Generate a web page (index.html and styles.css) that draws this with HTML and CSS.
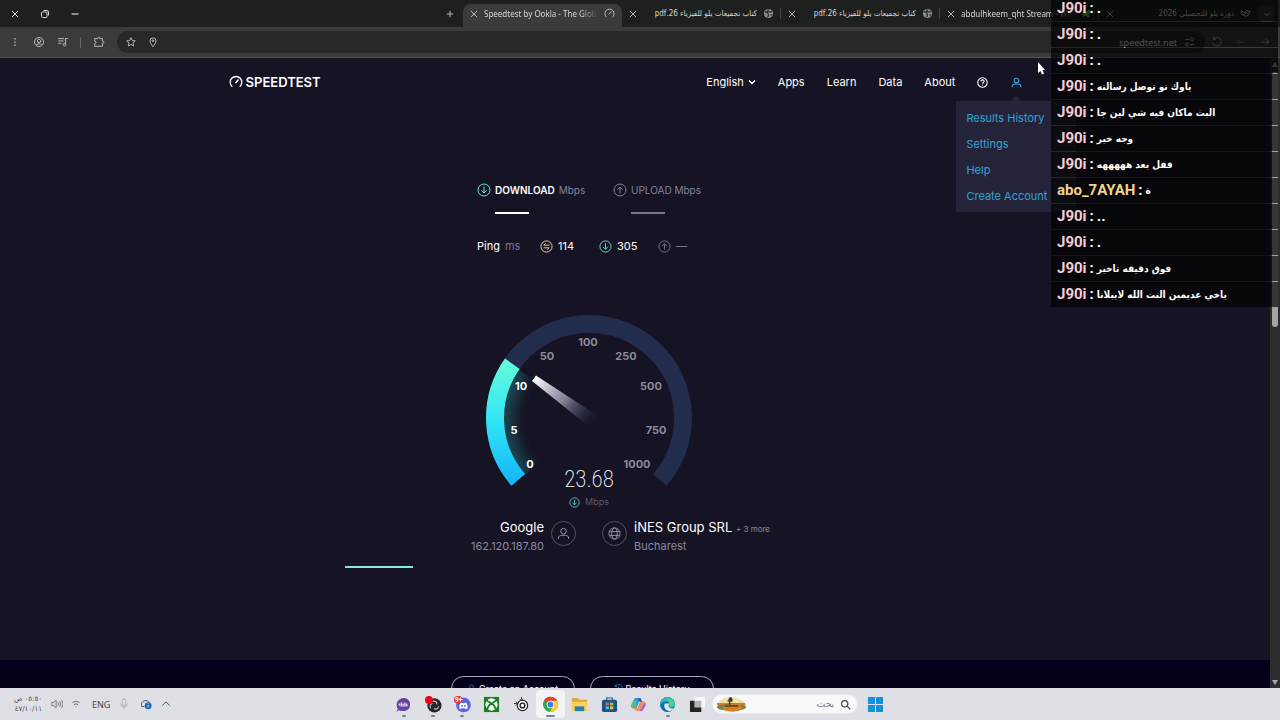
FILE: index.html
```html
<!DOCTYPE html>
<html lang="en">
<head>
<meta charset="utf-8">
<title>Speedtest by Ookla - The Global Broadband Speed Test</title>
<link rel="stylesheet" href="styles.css">
</head>
<body>
<svg class="defs" aria-hidden="true">
  <symbol id="close" viewBox="0 0 10 10"><path d="M1 1l8 8M9 1l-8 8"/></symbol>
  <symbol id="globe-solid" viewBox="0 0 12 12"><circle cx="6" cy="6" r="5" fill="#8b8c8b" stroke="none"/><path d="M2 4l3 1 1 3-1 2M6 1.500l-1 2 3 1 2-1M8 7l2 1" stroke="#2b2c2b" stroke-width="1.300"/></symbol>
  <symbol id="down" viewBox="0 0 14 14"><circle cx="7" cy="7" r="6"/><path d="M7 3.500v6.500M4.300 7.300L7 10l2.700-2.700"/></symbol>
  <symbol id="up" viewBox="0 0 14 14"><circle cx="7" cy="7" r="6"/><path d="M7 10.500V4M4.300 6.700L7 4l2.700 2.700"/></symbol>
  <symbol id="idle" viewBox="0 0 14 14"><circle cx="7" cy="7" r="6"/><path d="M10 5.600H4.200l2-2M4 8.400h5.800l-2 2"/></symbol>
  <symbol id="person" viewBox="0 0 14 14"><circle cx="7" cy="4.500" r="3"/><path d="M1.500 13v-1c0-2 1.500-3 3.500-3h4c2 0 3.500 1 3.500 3v1"/></symbol>
  <symbol id="gauge" viewBox="0 0 14 14"><path d="M3.300 11.700a5.800 5.800 0 1 1 7.400 0M6.500 8l3-3.500"/></symbol>
</svg>

<header class="tabstrip">
  <div class="window-controls">
    <button aria-label="Close"><svg viewBox="0 0 10 10"><path d="M2 2l6 6M8 2l-6 6"/></svg></button>
    <button aria-label="Restore"><svg viewBox="0 0 10 10"><rect x="1.500" y="3" width="5.500" height="5.500" rx="1"/><path d="M3.500 1.500h3.500q1.500 0 1.500 1.500v3.500"/></svg></button>
    <button aria-label="Minimize"><svg viewBox="0 0 10 10"><path d="M1.500 5h7" stroke="#909190" stroke-width="2"/></svg></button>
  </div>
  <button class="new-tab" aria-label="New tab"><svg viewBox="0 0 10 10"><path d="M5 1v8M1 5h8"/></svg></button>
  <div class="tabs">
    <div class="tab active"><button aria-label="Close tab"><svg><use href="#close"/></svg></button><span class="title">Speedtest by Ookla - The Globa</span><svg class="favicon"><use href="#gauge"/></svg></div>
    <div class="tab"><button aria-label="Close tab"><svg><use href="#close"/></svg></button><span class="title ar" dir="rtl">كتاب تجميعات يلو للفيزياء 26.pdf</span><svg class="favicon"><use href="#globe-solid"/></svg></div>
    <div class="tab"><button aria-label="Close tab"><svg><use href="#close"/></svg></button><span class="title ar" dir="rtl">كتاب تجميعات يلو للفيزياء 26.pdf</span><svg class="favicon"><use href="#globe-solid"/></svg></div>
    <div class="tab"><button aria-label="Close tab"><svg><use href="#close"/></svg></button><span class="title">abdulhkeem_qht Stream - Wat</span><svg class="favicon" viewBox="0 0 12 12"><path d="M2 3l4 1 3-2 1 3-2 2 2 3H7L5 8 2 10z" fill="#45e51d" stroke="none"/></svg></div>
    <div class="tab last"><button aria-label="Close tab"><svg><use href="#close"/></svg></button><span class="title ar" dir="rtl">دورة يلو للتحصيلي 2026</span><svg class="favicon" viewBox="0 0 12 12"><path d="M1 3l4 2 2-2 4 1-2 4-3 1-4-2zM4 7l3-2 2 2"/></svg></div>
  </div>
  <button class="tab-search" aria-label="Search tabs"><svg viewBox="0 0 10 10"><path d="M2.500 4L5 6.500 7.500 4"/></svg></button>
</header>

<div class="toolbar">
  <button aria-label="Menu"><svg viewBox="0 0 14 14"><path d="M7 2.500v1.500M7 6.300v1.500M7 10v1.500" stroke-width="1.600"/></svg></button>
  <button aria-label="Profile"><svg viewBox="0 0 14 14"><circle cx="7" cy="7" r="5.300"/><circle cx="7" cy="5.800" r="2"/><path d="M3.700 10.500c1.800-1.800 4.800-1.800 6.600 0"/></svg></button>
  <button aria-label="Media"><svg viewBox="0 0 14 14"><path d="M1.500 3h7M1.500 5.800h6M1.500 8.500h3.500M10 10V3h2.500"/><circle cx="8.600" cy="10" r="1.500"/></svg></button>
  <span class="divider"></span>
  <button class="ext" aria-label="Extensions"><svg viewBox="0 0 14 14"><path d="M2 3h3.500q0-1.700 1.200-1.700T8 3h3v3.200q1.700 0 1.700 1.200T11 8.600V12H2V9q1.500-.3 1.500-1.500T2 6z"/></svg></button>
  <div class="omnibox">
    <button aria-label="Bookmark"><svg viewBox="0 0 14 14"><path d="M7 2l1.500 3.300 3.500.4-2.600 2.400.7 3.500L7 9.900l-3.100 1.700.7-3.500L2 5.700l3.500-.4z"/></svg></button>
    <button aria-label="Location"><svg viewBox="0 0 14 14"><path d="M7 12.500C4.800 9.500 3.500 7.800 3.500 5.700a3.500 3.500 0 0 1 7 0c0 2.100-1.300 3.800-3.500 6.800z"/><circle cx="7" cy="5.500" r="1"/></svg></button>
    <input type="text" aria-label="Address" value="speedtest.net">
    <button aria-label="Site settings"><svg viewBox="0 0 14 14"><path d="M1.500 4h5M7 10h5.500"/><circle cx="9.500" cy="4" r="1.700"/><circle cx="3.500" cy="10" r="1.700"/></svg></button>
  </div>
  <button class="nav-button" aria-label="Reload"><svg viewBox="0 0 14 14"><path d="M3 3.500A5 5 0 1 1 2.200 8M3 1v3h3"/></svg></button>
  <button class="nav-button dim" aria-label="Forward"><svg viewBox="0 0 14 14"><path d="M11.500 7h-9M6 3.500L2.500 7 6 10.500"/></svg></button>
  <button class="nav-button" aria-label="Back"><svg viewBox="0 0 14 14"><path d="M2.500 7h9M8 3.500L11.500 7 8 10.500"/></svg></button>
</div>

<div class="viewport">
  <div class="page">
    <header class="site-header">
      <a class="logo" href="#"><svg><use href="#gauge"/></svg>SPEEDTEST</a>
      <nav>
        <button>English <svg class="caret" viewBox="0 0 8 8"><path d="M1 2.500l3 3 3-3"/></svg></button>
        <a href="#">Apps</a><a href="#">Learn</a><a href="#">Data</a><a href="#">About</a>
        <a href="#" class="nav-icon" aria-label="Help"><svg viewBox="0 0 14 14"><circle cx="7" cy="7" r="6"/><path d="M5 5.700c0-2.800 4.200-2.500 4.200-.2C9.200 7 7 7 7 8.600M7 9.600v1.200"/></svg></a>
        <div class="account">
          <button class="nav-icon user" aria-label="Account"><svg><use href="#person"/></svg></button>
          <div class="account-menu"><a href="#">Results History</a><a href="#">Settings</a><a href="#">Help</a><a href="#">Create Account</a></div>
        </div>
      </nav>
    </header>

    <main class="stage">
      <div class="speeds">
        <section class="speed down"><h2><svg><use href="#down"/></svg><b>DOWNLOAD</b> Mbps</h2><span class="dash"></span></section>
        <section class="speed up"><h2><svg><use href="#up"/></svg>UPLOAD Mbps</h2><span class="dash"></span></section>
      </div>
      <div class="pings">
        <span class="ping-label">Ping <em>ms</em></span>
        <span class="idle"><svg><use href="#idle"/></svg>114</span>
        <span class="down"><svg><use href="#down"/></svg>305</span>
        <span class="up"><svg><use href="#up"/></svg>—</span>
      </div>
      <svg class="dial" viewBox="0 0 220 182" role="img" aria-label="23.68 Mbps">
        <defs>
          <linearGradient id="arc" x1="0" y1="0" x2="0" y2="1"><stop offset="0" stop-color="#62fbdc"/><stop offset=".5" stop-color="#31e4f5"/><stop offset="1" stop-color="#16b9f8"/></linearGradient>
          <linearGradient id="needle" gradientUnits="userSpaceOnUse" x1="55" y1="68" x2="117" y2="112"><stop offset="0" stop-color="#fff"/><stop offset=".5" stop-color="#9492a8" stop-opacity=".85"/><stop offset="1" stop-color="#223050" stop-opacity="0"/></linearGradient>
          <filter id="soft" x="-50%" y="-50%" width="200%" height="200%"><feGaussianBlur stdDeviation="8"/></filter>
          <clipPath id="inside"><path d="M110 108L39 59A85 85 0 0 0 46 165z"/></clipPath>
        </defs>
        <g clip-path="url(#inside)"><path d="M45 170A84 84 0 0 1 40 56" fill="none" stroke="#32d9d2" stroke-width="26" opacity=".3" filter="url(#soft)"/></g>
        <path class="track" d="M39.300 169.900A94 94 0 1 1 180.700 169.900"/>
        <path class="fill" d="M39.300 169.900A94 94 0 0 1 33.300 53.700"/>
        <path d="M57 65.500L53 71l55 44q8 0 11-9z" fill="url(#needle)" stroke="none"/>
        <g class="ticks">
          <g class="passed"><text x="51" y="158">0</text><text x="35" y="124">5</text><text x="42" y="80">10</text></g>
          <text x="68" y="50">50</text><text x="109" y="36">100</text><text x="147" y="50">250</text><text x="172" y="80">500</text><text x="177" y="124">750</text><text x="158" y="158">1000</text>
        </g>
        <text class="reading" x="110" y="177">23.68</text>
      </svg>
      <div class="unit"><svg><use href="#down"/></svg>Mbps</div>
      <div class="endpoints">
        <div class="endpoint client"><div><strong>Google</strong><span>162.120.187.80</span></div><i class="badge"><svg><use href="#person"/></svg></i></div>
        <div class="endpoint"><i class="badge"><svg viewBox="0 0 14 14"><circle cx="7" cy="7" r="6"/><ellipse cx="7" cy="7" rx="3" ry="6"/><path d="M1.500 5h11M1.500 9h11"/></svg></i><div><strong>iNES Group SRL <small>+ 3 more</small></strong><span>Bucharest</span></div></div>
      </div>
      <div class="progress"><div style="width:14%"></div></div>
    </main>

    <footer class="site-footer">
      <a href="#"><svg><use href="#person"/></svg>Create an Account</a>
      <a href="#"><svg viewBox="0 0 14 14"><path d="M2 3.500A6 6 0 1 1 1.500 9M2 1v3h3M7 4v4l3 1"/></svg>Results History</a>
    </footer>
  </div>
  <div class="scrollbar"><span class="arrow-up"></span><span class="thumb"></span><span class="arrow-down"></span></div>
</div>

<footer class="taskbar">
  <div class="tray">
    <time><span dir="rtl">٠٥:٥٠ ص</span><span dir="ltr"><bdo dir="ltr">٤٧/١٠/١١</bdo></span></time>
    <svg class="volume" viewBox="0 0 14 14"><path d="M1 5h2l3-2.500v9L3 9H1zM8 5q1.500 2 0 4M10 3.500q3 3.500 0 7M12 2q4 5 0 10"/></svg>
    <svg class="wifi" viewBox="0 0 14 14"><path d="M2 5q5-4 10 0M4 8q3-2.500 6 0M6.500 11h1"/></svg>
    <span class="lang">ENG</span>
    <svg class="mic" viewBox="0 0 14 14"><rect x="5" y="1" width="4" height="7.500" rx="2"/><path d="M3 6.500q0 4 4 4t4-4M7 10.500V13"/></svg>
    <svg class="sync" viewBox="0 0 14 14"><path d="M2 10q-1.500-6 4-7 3-.5 5 2M2 10h3"/><circle cx="9.500" cy="9" r="4" fill="#1769b5" stroke="none"/><path d="M9.500 8v3M9.500 6v1" stroke="#fff"/></svg>
    <svg class="expand" viewBox="0 0 14 14"><path d="M2.500 9L7 4.500 11.500 9"/></svg>
  </div>
  <div class="dock">
    <div class="apps">
      <button class="running" aria-label="Chat"><svg viewBox="0 0 18 18"><path d="M3 14q-2-3-1-7 2-5 8-5 6 1 6 7 0 6-6 7-4 0-6-1l-3 2z" fill="#68449f"/><path d="M4.500 10V8m2 3V7m2 4V8m2 3V7m2 4V8" stroke="#fff" stroke-width="1.200"/></svg></button>
      <button class="running" aria-label="OBS"><svg viewBox="0 0 18 18"><circle cx="10" cy="10" r="7.500" fill="#272528"/><path d="M8 5.500q5-.5 4.500 3.500M14.500 11q-2 4.500-5 2M6 13q-2-4 2-5" stroke="#ccc" stroke-width="1.100" fill="none"/><circle cx="4.200" cy="4.200" r="4.200" fill="#ed0618"/></svg></button>
      <button class="running" aria-label="Discord"><svg viewBox="0 0 18 18"><circle cx="10" cy="9.500" r="7.800" fill="#5965e8"/><path d="M5.500 13q0-5 2-6l2 .7h1l2-.7q2 1 2 6l-2 1-1-1H8l-1 1z" fill="#fff"/><circle cx="8.500" cy="10.500" r="1" fill="#5965e8"/><circle cx="11.500" cy="10.500" r="1" fill="#5965e8"/><rect x="0" y="0" width="9" height="8" rx="4" fill="#d93543"/><text x="1" y="6.500" class="count">9+</text></svg></button>
      <button aria-label="Xbox"><svg viewBox="0 0 18 18"><rect x="1" y="1" width="16" height="16" fill="#178020"/><circle cx="9" cy="9" r="6.500" fill="#fff"/><path d="M3.500 4.500Q8 7 9 8.500 10 7 14.500 4.500M9 7.500Q5.500 10 4.300 14M9 7.500Q12.500 10 13.700 14" fill="none" stroke="#178020" stroke-width="2"/></svg></button>
      <button aria-label="Settings"><svg viewBox="0 0 18 18"><circle cx="10" cy="10" r="5.500" fill="#f4f4f4" stroke="#222" stroke-width="1.200"/><circle cx="10" cy="10" r="2.500" fill="#fff" stroke="#222" stroke-width="1.500"/><path d="M1 8h4M3 6l2 2-2 2M9 1v3M7 3l2 2 2-2" stroke="#333" fill="none"/></svg></button>
      <button class="running current" aria-label="Chrome"><svg viewBox="0 0 18 18"><circle cx="9" cy="9" r="8" fill="#34a853"/><path d="M9 9L2 5A8 8 0 0 1 16 5z" fill="#df3f35"/><path d="M9 5h7a8 8 0 0 1-7.500 12L12 10z" fill="#f7cb34"/><circle cx="9" cy="9" r="4" fill="#fff"/><circle cx="9" cy="9" r="3.100" fill="#3c80e8"/></svg></button>
      <button aria-label="Files"><svg viewBox="0 0 18 18"><path d="M1 2h6l2 2h8v12H1z" fill="#e3a52b"/><path d="M1 6h16v10H1z" fill="#f9d15e"/><path d="M4 11h10v5H4z" fill="#237eb6"/></svg></button>
      <button aria-label="Store"><svg viewBox="0 0 18 18"><path d="M6 5V2h6v3" stroke="#2a87c7" fill="none" stroke-width="1.500"/><rect x="1" y="4" width="16" height="13" rx="2" fill="#205284"/><path d="M5 7h3.500v3H5z" fill="#ee6548"/><path d="M9.500 7H13v3H9.500z" fill="#95c943"/><path d="M5 11h3.500v3H5z" fill="#4bb9ec"/><path d="M9.500 11H13v3H9.500z" fill="#f3c546"/></svg></button>
      <button aria-label="Copilot"><svg viewBox="0 0 18 18"><path d="M5 2h6L7 13H3Q0 12 2 8z" fill="#269de0"/><path d="M2 8l4-5 1 8-4 2Q0 12 2 8" fill="#57bf70"/><path d="M11 2l2 4h2q3 2 1 5l-3 5H7l4-10z" fill="#a35dd9"/><path d="M3 13h5l3-7h5l-3 6-3 4H7z" fill="#ef8d69"/><path d="M8 2h3l2 4h-3z" fill="#285ac5"/></svg></button>
      <button class="running" aria-label="Edge"><svg viewBox="0 0 18 18"><circle cx="9" cy="9" r="8" fill="#1768b6"/><path d="M1 8Q3 1 9 1q8 1 8 8-1 4-5 3-2-1-1-3-1-5-6-3-3 1-4 4" fill="#30bdba"/><path d="M6 8q-2 6 4 8 4 0 6-3-5 1-6-3l1-2z" fill="#d9eef5"/><path d="M11 3q5 1 5 6-1 2-4 2l-1-2q2-4-3-4" fill="#5dcf75"/></svg></button>
      <button aria-label="Task view"><svg viewBox="0 0 18 18"><path d="M6 1h11v11H6z" fill="#f6f6f6"/><path d="M1 5h5v7h7v5H1z" fill="#242425"/><path d="M6 5h7v7H6z" fill="#b4b5b7"/></svg></button>
    </div>
    <label class="search" dir="ltr"><svg class="art" viewBox="0 0 32 16"><path d="M1 9Q5 1 15 1t16 7l-4 4H5z" fill="#f3dfa2"/><ellipse cx="16" cy="11" rx="15" ry="4" fill="#718049"/><ellipse cx="17" cy="12" rx="10" ry="4" fill="#d87d27"/><path d="M9 10h14M14 9V5M12 5h5" stroke="#4d3826" stroke-width="1.500"/><circle cx="15" cy="3" r="2" fill="#3e3528"/><path d="M1 8h8M22 8h8" stroke="#c28229" stroke-width="2"/></svg><input type="search" dir="rtl" placeholder="بحث" aria-label="بحث"><svg class="lens" viewBox="0 0 14 14"><circle cx="6" cy="6" r="4"/><path d="M9 9l4 4"/></svg></label>
    <button class="start" aria-label="Start"><svg viewBox="0 0 18 18"><path d="M1 1h7.500v7.500H1zM9.500 1H17v7.500H9.500zM1 9.500h7.500V17H1zM9.500 9.500H17V17H9.500z" fill="#1693dd"/></svg></button>
  </div>
</footer>

<aside class="chat">
  <p><b>J90i</b> : <span>.</span></p>
  <p><b>J90i</b> : <span>.</span></p>
  <p><b>J90i</b> : <span>.</span></p>
  <p><b>J90i</b> : <span class="msg" dir="rtl">ياوك تو توصل رسالته</span></p>
  <p><b>J90i</b> : <span class="msg" dir="rtl">البث ماكان فيه شي لين جا</span></p>
  <p><b>J90i</b> : <span class="msg" dir="rtl">وجه خير</span></p>
  <p><b>J90i</b> : <span class="msg" dir="rtl">قفل بعد هههههه</span></p>
  <p><b class="gold">abo_7AYAH</b> : <span class="msg" dir="rtl">ة</span></p>
  <p><b>J90i</b> : <span>..</span></p>
  <p><b>J90i</b> : <span>.</span></p>
  <p><b>J90i</b> : <span class="msg" dir="rtl">فوق دقيقه تاخير</span></p>
  <p><b>J90i</b> : <span class="msg" dir="rtl">ياخي عديمين النت الله لايبلانا</span></p>
</aside>
<svg class="pointer" viewBox="0 0 8 13" aria-hidden="true"><path d="M1 0v11l2.500-2 1.500 3.500 2-1L5.500 8H8z"/></svg>
</body>
</html>
```
FILE: styles.css
```css
* { box-sizing: border-box; }
body { margin: 0; height: 100vh; display: flex; flex-direction: column; overflow: hidden; position: relative; background: #151324; color: #fff; font-family: Inter, "DejaVu Sans", sans-serif; font-size: 11px; }
button { padding: 0; border: 0; background: none; color: inherit; font: inherit; display: flex; align-items: center; justify-content: center; }
a { color: inherit; text-decoration: none; }
svg { fill: none; stroke: currentColor; flex: none; display: block; }
.defs { position: absolute; width: 0; height: 0; }

.tabstrip { height: 27px; flex: none; display: flex; align-items: center; background: #1e201f; color: #d5d6d5; }
.window-controls { display: flex; flex: 1; }
.window-controls button { width: 30px; height: 27px; }
.window-controls svg { width: 10px; height: 10px; }
.new-tab { width: 26px; height: 27px; }
.new-tab svg { width: 8px; height: 8px; }
.tabs { display: flex; align-self: stretch; }
.tab { width: 159px; display: flex; align-items: center; gap: 6px; padding: 0 7px 4px; margin-top: 4px; height: 23px; position: relative; font-family: "Noto Sans", "DejaVu Sans", sans-serif; }
.tab svg { width: 8px; height: 8px; }
.tab .favicon { width: 11px; height: 11px; }
.tab.active { background: #3a3b3a; border-radius: 8px 8px 0 0; }
.tab .title { flex: 1; min-width: 0; white-space: nowrap; overflow: hidden; font-size: 8px; }
.tab .title:not(.ar) { mask-image: linear-gradient(to right, #000 85%, transparent); }
.tab .ar { font-family: "DejaVu Sans Condensed", "DejaVu Sans", sans-serif; font-size: 8px; }
.tab:not(.active):not(.last)::after { content: ""; position: absolute; right: 0; top: 4px; height: 11px; border-right: 1px solid #434443; }
.tab-search { width: 17px; height: 17px; margin: 0 5px 0 0; border-radius: 5px; background: #333433; }
.tab-search svg { width: 10px; height: 10px; }

.toolbar { height: 31px; flex: none; display: flex; align-items: center; background: #3a3b3a; border-bottom: 1px solid #50514f; padding: 0 3px; color: #c9cac9; }
.toolbar button { width: 24px; height: 24px; }
.toolbar svg { width: 12px; height: 12px; }
.toolbar .divider { width: 1px; height: 11px; margin: 0 6px 0 5px; background: #666; }
.toolbar .ext { margin-right: 6px; }
.toolbar .dim { opacity: .5; }
.omnibox { flex: 1; min-width: 0; height: 22px; display: flex; align-items: center; border-radius: 11px; background: #282828; padding: 0 4px 0 3px; }
.toolbar .omnibox button { width: 22px; }
.omnibox input { flex: 1; min-width: 0; border: 0; background: none; color: #e8e8e8; text-align: right; font: 9px "Noto Sans", sans-serif; }

.viewport { flex: 1; min-height: 0; display: flex; }
.page { flex: 1; min-width: 0; display: flex; flex-direction: column; }
.site-header { display: flex; justify-content: space-between; align-items: center; width: 64%; margin: 0 auto; height: 48px; padding-right: 19px; }
.logo { display: flex; align-items: center; gap: 3px; font-size: 13px; font-weight: 600; }
.logo svg { width: 14px; height: 14px; stroke-width: 1.400; }
.site-header nav { display: flex; align-items: center; gap: 22px; }
.caret { width: 8px; height: 8px; margin-left: 4px; stroke-width: 1.400; }
.nav-icon svg { width: 11px; height: 11px; stroke-width: 1.400; }
.account { position: relative; }
.nav-icon.user { color: #36a4d8; width: 12px; }
.account-menu { position: absolute; top: 24px; left: 50%; transform: translateX(-50%); width: 120px; padding: 4px 10px 3px; background: #25233a; color: #2fa5d3; white-space: nowrap; }
.account-menu::before { content: ""; position: absolute; left: 55px; top: -5px; border: 5px solid transparent; border-top: 0; border-bottom-color: #25233a; }
.account-menu a { display: block; line-height: 26px; font-size: 11px; }

.stage { flex: 1; display: flex; flex-direction: column; align-items: center; padding: 76px 92px 0 0; }
.speeds { display: grid; grid-template-columns: 136px 88px; }
.speed h2 { display: flex; align-items: center; gap: 4px; margin: 0; font-size: 10px; line-height: 16px; font-weight: 400; color: #85839a; white-space: nowrap; }
.speed h2 b { color: #fff; font-weight: 600; }
.speed h2 svg { width: 14px; height: 14px; }
.speed.down svg, .pings .down svg, .unit svg { color: #69e5dc; }
.dash { display: block; width: 34px; height: 2px; margin: 14px 0 0 18px; background: #fff; }
.up .dash { background: #77758b; }
.pings { display: grid; grid-template-columns: 63px 59px 59px 43px; margin-top: 24px; line-height: 16px; }
.pings span { display: flex; align-items: center; gap: 5px; }
.pings em { font-style: normal; color: #77758b; }
.pings svg { width: 13px; height: 13px; }
.pings .idle svg { color: #eee69a; }
.pings .up { color: #77758b; }
.dial { width: 220px; height: 182px; margin-top: 56px; }
.track, .fill { stroke-width: 18; fill: none; }
.track { stroke: #222d4d; }
.fill { stroke: url(#arc); }
.ticks { fill: #8c8a99; stroke: none; font-size: 11px; font-weight: 700; text-anchor: middle; }
.passed { fill: #fff; }
.reading { fill: #fff; stroke: none; font-family: "Roboto Condensed", Roboto, sans-serif; font-size: 23px; font-weight: 200; text-anchor: middle; }
.unit { display: flex; align-items: center; gap: 5px; margin-top: 4px; font-size: 9px; line-height: 12px; color: #5b596d; }
.unit svg { width: 11px; height: 11px; }
.endpoints { display: grid; grid-template-columns: 1fr 1fr; gap: 26px; width: 488px; margin-top: 9px; }
.endpoint { display: flex; align-items: flex-start; gap: 7px; white-space: nowrap; }
.client { justify-content: flex-end; text-align: right; }
.endpoint strong { display: block; height: 20px; font-size: 13px; font-weight: 400; line-height: 20px; }
.endpoint span { display: block; font-size: 11px; line-height: 18px; color: #8b899d; }
.endpoint small { font-size: 8px; line-height: 8px; color: #8b899d; }
.badge { width: 25px; height: 25px; margin-top: 4px; display: grid; place-items: center; border: 1px solid #535166; border-radius: 50%; color: #9b99aa; }
.badge svg { width: 13px; height: 13px; }
.progress { width: 488px; height: 2px; margin-top: 11px; }
.progress div { height: 2px; background: #85e8e2; }
.site-footer { height: 28px; flex: none; overflow: hidden; display: flex; justify-content: center; align-items: flex-start; gap: 15px; padding: 16px 106px 0 0; background: #04001c; }
.site-footer a { width: 124px; height: 25px; display: flex; align-items: center; justify-content: center; gap: 3px; border: 1px solid #aaa8b8; border-radius: 13px; font-size: 9px; }
.site-footer svg { width: 9px; height: 9px; color: #28a8dc; }
.scrollbar { width: 10px; display: flex; flex-direction: column; align-items: center; background: #2c2d2c; padding: 4px 0 3px; }
.arrow-up, .arrow-down { border: 3px solid transparent; }
.arrow-up { border-top: 0; border-bottom: 5px solid #a7a8a7; margin-bottom: 5px; }
.arrow-down { border-bottom: 0; border-top: 5px solid #a7a8a7; margin-top: auto; }
.thumb { width: 6px; height: 41%; border-radius: 3px; background: #a5a5a5; }

.taskbar { height: 32px; flex: none; display: grid; grid-template-columns: 1fr auto 1fr; align-items: center; padding-right: 7px; background: #dfe0e5; color: #444; }
.tray { display: flex; align-items: center; padding-left: 12px; gap: 8px; }
.tray svg { width: 12px; height: 12px; }
.tray time { width: 30px; font: 7px/10px "DejaVu Sans", sans-serif; text-align: right; margin-right: 1px; }
.tray time span { display: block; }
.tray .wifi { width: 10px; margin-right: 3px; }
.tray .lang { font: 9px "Noto Sans", sans-serif; margin-right: 0; }
.tray .mic { color: #aaa; }
.tray .volume { color: #666; }
.tray .mic, .tray .expand { margin-right: 2px; }
.dock { display: flex; align-items: center; }
.apps { display: grid; grid-template-columns: repeat(11, 1fr); width: 323px; }
.apps button { height: 28px; position: relative; border-radius: 4px; }
.apps svg, .start svg { width: 17px; height: 17px; stroke: none; }
.apps .current { background: #f3f4f6; }
.running::after { content: ""; position: absolute; bottom: 1px; width: 4px; height: 2px; border-radius: 1px; background: #808188; }
.current::after { width: 9px; }
.count { font: 700 7px Roboto, sans-serif; fill: #fff; }
.search { width: 146px; height: 20px; display: flex; align-items: center; gap: 4px; padding: 0 6px 0 3px; border: 1px solid #e9eaed; border-radius: 10px; background: #f8f9fa; }
.search input { flex: 1; min-width: 0; border: 0; background: none; outline: 0; font: 9px "DejaVu Sans", sans-serif; padding: 0 2px; }
.search input::placeholder { color: #77787d; }
.search .art { width: 31px; height: 16px; stroke: none; }
.search .lens { width: 11px; height: 11px; stroke-width: 1.500; }
.start { margin-left: 8px; width: 18px; height: 28px; }

.chat { position: absolute; top: 0; right: 2px; width: 227px; height: 307px; display: flex; flex-direction: column; justify-content: flex-end; gap: 1px; overflow: hidden; font-family: Roboto, sans-serif; font-size: 15px; font-weight: 700; }
.chat p { flex: none; display: flex; align-items: center; gap: 3px; margin: 0; padding: 0 6px 1px; height: 25px; background: rgba(0, 0, 0, .68); white-space: nowrap; }
.chat b { color: #f4cdd6; font-weight: 700; font-size: 15px; }
.chat b.gold { color: #f3d18e; }
.chat .msg { font-family: "DejaVu Sans Condensed", "DejaVu Sans", sans-serif; font-size: 10px; }
.pointer { position: absolute; left: 1037px; top: 62px; width: 8px; height: 13px; fill: #fff; stroke: none; }
```
